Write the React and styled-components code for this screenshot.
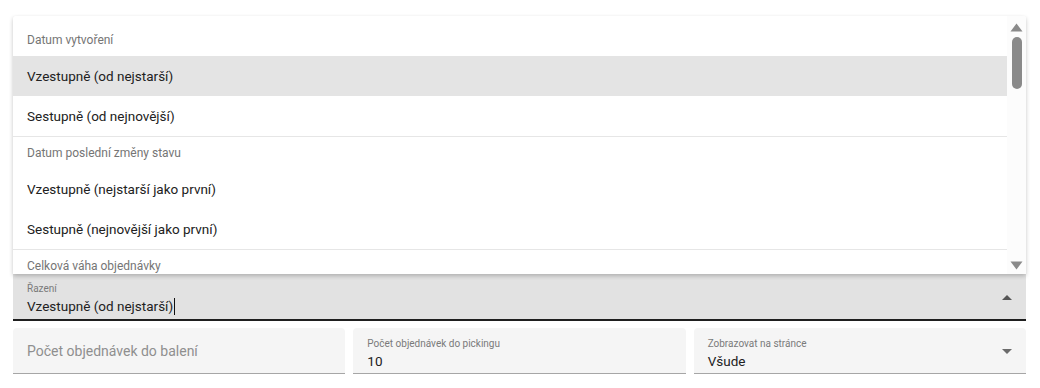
import styled, { createGlobalStyle } from 'styled-components'

const Global = createGlobalStyle`
body {
  margin: 0;
  background: #fff;
  font-family: Roboto, "Noto Sans", sans-serif;
}
`

const Page = styled.div`
padding: 16px 14px 0 13px;
width: 1013px;
`

const Menu = styled.div`
position: relative;
z-index: 2;
height: 258px;
display: flex;
background: #fff;
border-radius: 2px 2px 0 0;
box-shadow: 0 2px 4px rgba(0, 0, 0, 0.22), 0 0 1px rgba(0, 0, 0, 0.06);
overflow: hidden;
`

const List = styled.div`
flex: 1;
padding-top: 8px;
`

const SubHeader = styled.div`
height: 32px;
line-height: 32px;
padding-left: 14px;
font-size: 12px;
color: #757575;
`

const Item = styled.div`
height: 40px;
line-height: 40px;
padding-left: 14px;
font-size: 13.5px;
color: #212121;
background: ${p => (p.$active ? '#e4e4e4' : 'transparent')};
`

const Divider = styled.div`
height: 1px;
background: #e6e6e6;
`

const ScrollBar = styled.div`
width: 19px;
background: #fcfcfc;
display: flex;
flex-direction: column;
align-items: center;
padding-top: 7px;
`

const Thumb = styled.div`
width: 10px;
height: 52px;
margin-top: 5px;
border-radius: 5px;
background: #8a8a8a;
`

const Spacer = styled.div`
flex: 1;
`

const Arrow = ({ up }) => (
  <svg width="13" height="9" viewBox="0 0 13 9" style={{ marginBottom: up ? 0 : 4 }}>
    <path d={up ? 'M6.5 0.5 L12.5 8.5 L0.5 8.5 Z' : 'M0.5 0.5 L12.5 0.5 L6.5 8.5 Z'} fill="#8a8a8a" />
  </svg>
)

const Field = styled.div`
position: relative;
height: ${p => p.$h || 46}px;
background: ${p => (p.$focused ? '#e2e2e2' : '#f5f5f5')};
border-bottom: ${p => (p.$focused ? '2px solid #1f1f1f' : '1px solid #a6a6a6')};
border-radius: ${p => (p.$focused ? '0' : '4px 4px 0 0')};
padding: 0 14px;
display: flex;
flex-direction: column;
justify-content: ${p => (p.$center ? 'center' : 'flex-start')};
box-sizing: border-box;
`

const Label = styled.div`
font-size: 10px;
color: #7a7a7a;
margin-top: ${p => p.$top || 10}px;
line-height: 12px;
`

const Value = styled.div`
font-size: 13.5px;
color: #212121;
margin-top: 2px;
line-height: 18px;
display: flex;
align-items: center;
`

const Caret = styled.span`
display: inline-block;
width: 1px;
height: 17px;
background: #111;
margin-left: 1px;
`

const Placeholder = styled.div`
font-size: 14px;
color: #8f8f8f;
`

const DropIcon = styled.div`
position: absolute;
right: 14px;
top: 50%;
margin-top: -2px;
width: 0;
height: 0;
border-left: 5px solid transparent;
border-right: 5px solid transparent;
${p => (p.$up ? 'border-bottom: 5px solid #555;' : 'border-top: 5px solid #6b6b6b;')}
`

const Row = styled.div`
display: grid;
grid-template-columns: 1fr 1fr 1fr;
gap: 8px;
margin-top: 7px;
`

const App = () => (
  <Page>
    <Global />
    <Menu>
      <List>
        <SubHeader>Datum vytvoření</SubHeader>
        <Item $active>Vzestupně (od nejstarší)</Item>
        <Item>Sestupně (od nejnovější)</Item>
        <Divider />
        <SubHeader>Datum poslední změny stavu</SubHeader>
        <Item>Vzestupně (nejstarší jako první)</Item>
        <Item>Sestupně (nejnovější jako první)</Item>
        <Divider />
        <SubHeader>Celková váha objednávky</SubHeader>
      </List>
      <ScrollBar>
        <Arrow up />
        <Thumb />
        <Spacer />
        <Arrow />
      </ScrollBar>
    </Menu>
    <Field $focused $h={47}>
      <Label $top={9}>Řazení</Label>
      <Value>Vzestupně (od nejstarší)<Caret /></Value>
      <DropIcon $up />
    </Field>
    <Row>
      <Field $center>
        <Placeholder>Počet objednávek do balení</Placeholder>
      </Field>
      <Field>
        <Label>Počet objednávek do pickingu</Label>
        <Value>10</Value>
      </Field>
      <Field>
        <Label>Zobrazovat na stránce</Label>
        <Value>Všude</Value>
        <DropIcon />
      </Field>
    </Row>
  </Page>
)

export default App
